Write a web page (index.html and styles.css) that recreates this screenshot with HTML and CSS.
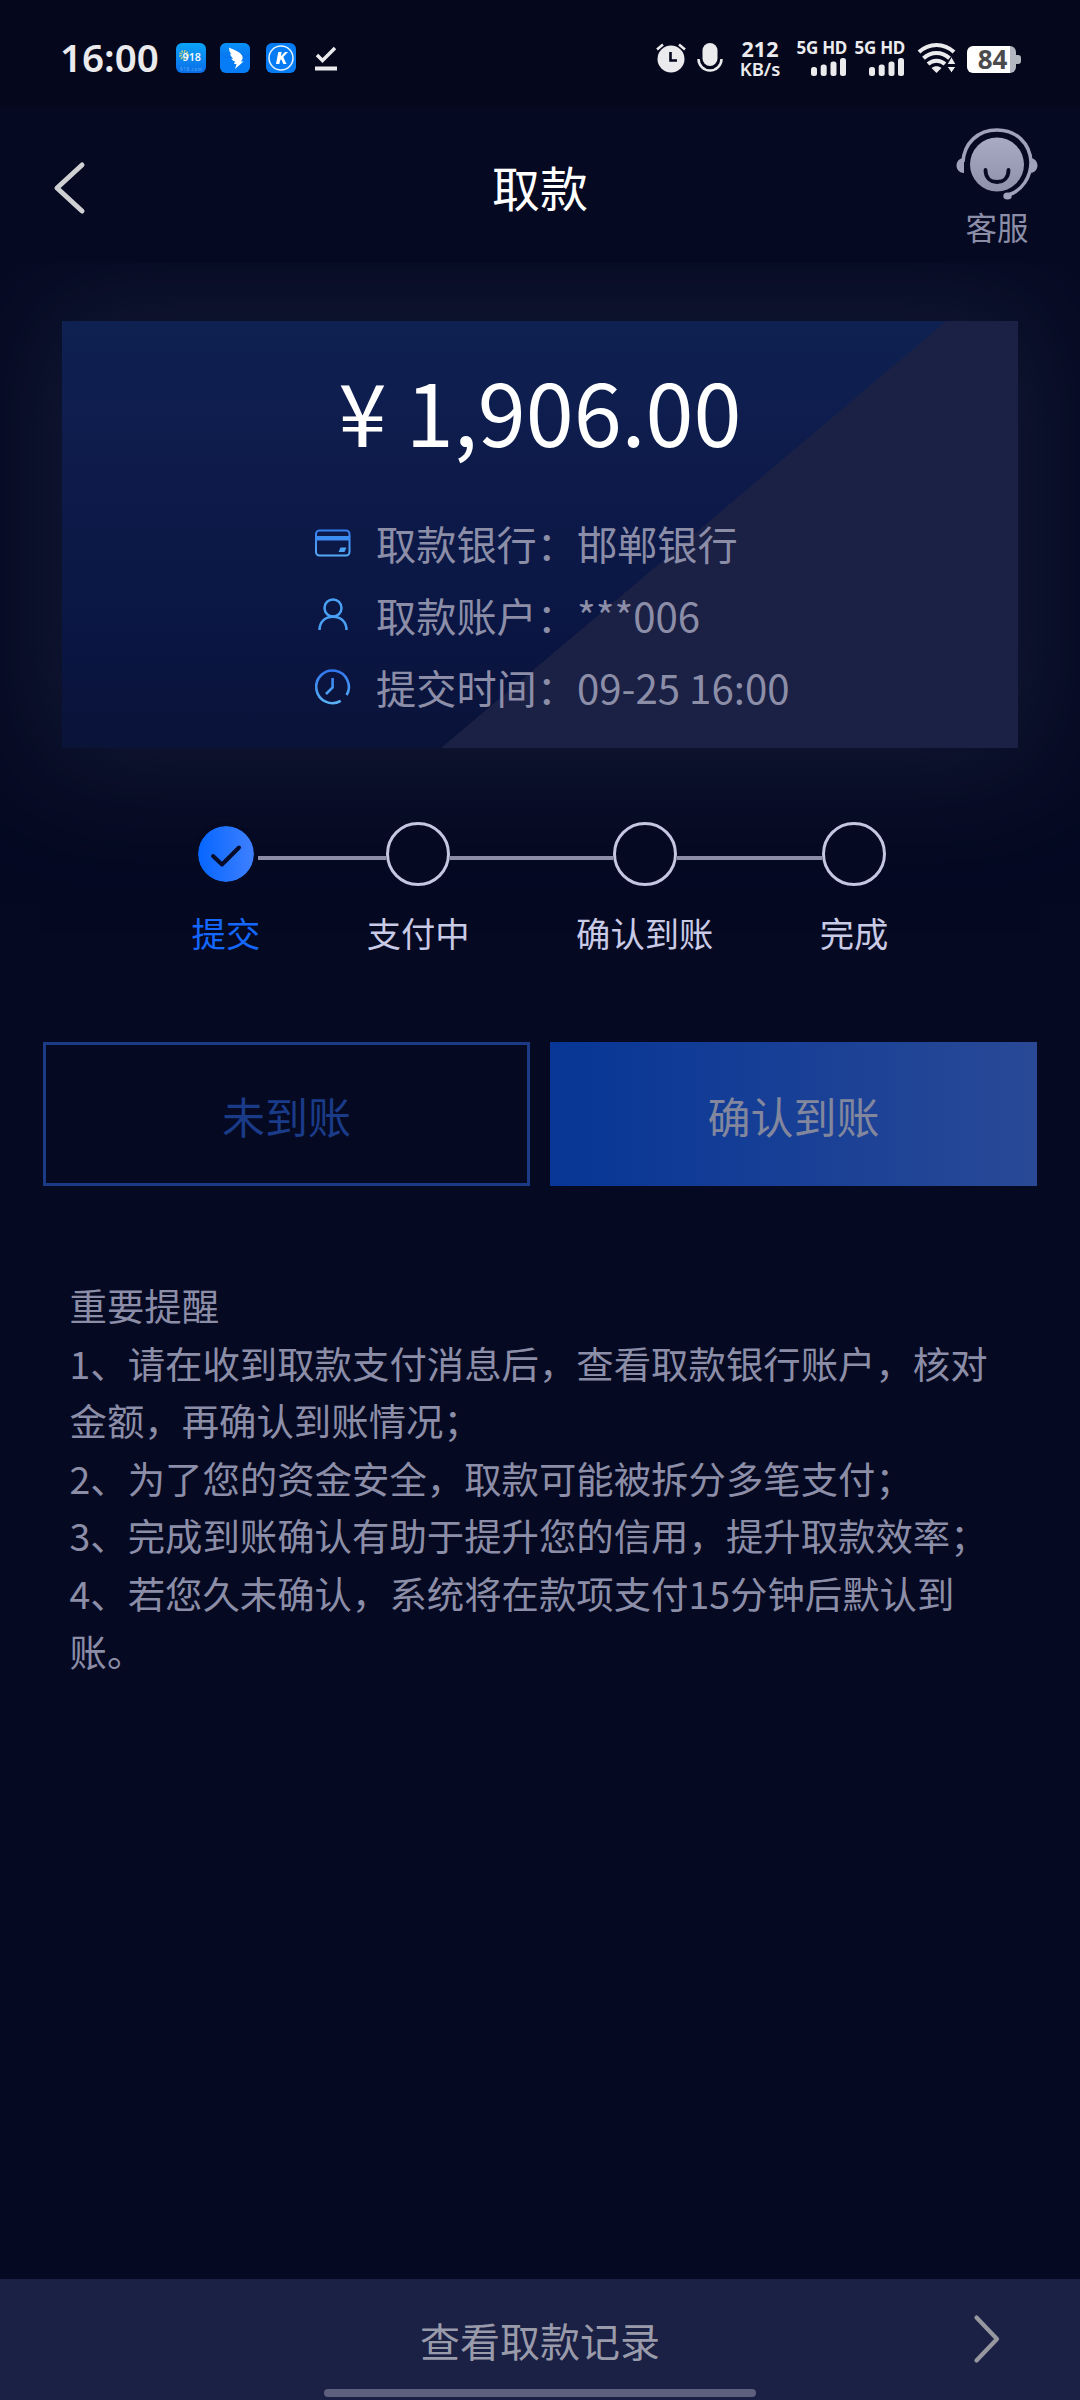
FILE: index.html
```html
<!DOCTYPE html>
<html lang="zh-CN">
<head>
<meta charset="utf-8">
<title>取款</title>
<link rel="stylesheet" href="styles.css">
</head>
<body>
<div class="status">
  <div class="status-left">
    <span class="clock">16:00</span>
    <svg class="app app-918" width="30" height="30" viewBox="0 0 30 30">
      <defs><linearGradient id="sky" x1="0" y1="0" x2="0" y2="1"><stop offset="0" stop-color="#0aa5f8"/><stop offset="1" stop-color="#0a6ce8"/></linearGradient></defs>
      <rect width="30" height="30" rx="6" fill="url(#sky)"/>
      <circle cx="8" cy="12" r="3.5" fill="none" stroke="#b9c98a" stroke-width="3" stroke-dasharray="1.3 1"/>
      <text x="6.500" y="18" class="t918" textLength="18.500" lengthAdjust="spacingAndGlyphs">918</text>
      <text x="4" y="27.500" class="tcoin" textLength="22">918.com</text>
    </svg>
    <svg class="app app-bird" width="30" height="30" viewBox="0 0 30 30">
      <rect width="30" height="30" rx="6" fill="#067df6"/><rect width="30" height="15" rx="6" fill="url(#sky)" opacity=".5"/>
      <path d="M9 4.500C14 7 21 9 22.500 13.500c.6 2-.5 3.500-1.500 5h2.500L15 26l1.500-5H14l1-2.500c-2-.5-3-1.700-3.600-3l2 .2c-2-1.500-3-3.200-3.400-5l1.600.8C9.500 9 9 7 9 4.500z" fill="#fff"/>
    </svg>
    <svg class="app app-k" width="30" height="30" viewBox="0 0 30 30">
      <rect width="30" height="30" rx="6" fill="#057cf3"/>
      <circle cx="15" cy="15" r="12" fill="none" stroke="#e8f3ff" stroke-width="1.500"/>
      <path d="M12.300 9h3.400l-.9 4.300L19 9h3l-4.700 5 3.200 7h-3.200l-2.100-4.700-1.100 1.200-.7 3.500H10z" fill="#fff"/>
    </svg>
    <svg class="tick" width="22" height="26" viewBox="0 0 22 26"><path d="M2 10l5.500 5.500L20 3" fill="none" stroke="#ebebee" stroke-width="3.500"/><rect y="21.500" width="22" height="4" fill="#ebebee"/></svg>
  </div>
  <div class="status-right">
    <svg class="alarm" width="30" height="30" viewBox="0 0 30 30"><circle cx="15" cy="16" r="13.500" fill="#ebebee"/><path d="M1 6.500L7 1.500M29 6.500l-6-5" stroke="#ebebee" stroke-width="2.500"/><path d="M14.500 9v8.500H21" fill="none" stroke="#05071d" stroke-width="2.600"/></svg>
    <svg class="mic" width="26" height="30" viewBox="0 0 26 30"><rect x="5.500" y="0" width="15" height="23" rx="7.500" fill="#ebebee"/><path d="M1.500 16a11.500 11.500 0 0 0 23 0" fill="none" stroke="#ebebee" stroke-width="2.500"/></svg>
    <span class="rate"><b>212</b><b>KB/s</b></span>
    <span class="sim"><b>5G HD</b><svg width="36" height="18" viewBox="0 0 36 18" fill="#ebebee"><rect x="0" y="9" width="6" height="9" rx="2.500"/><rect x="9.700" y="6.500" width="6" height="11.500" rx="2.500"/><rect x="19.500" y="3.500" width="6" height="14.500" rx="2.500"/><rect x="29" y="0" width="6" height="18" rx="2.500"/></svg></span>
    <span class="sim sim2"><b>5G HD</b><svg width="36" height="18" viewBox="0 0 36 18" fill="#ebebee"><rect x="0" y="9" width="6" height="9" rx="2.500"/><rect x="9.700" y="6.500" width="6" height="11.500" rx="2.500"/><rect x="19.500" y="3.500" width="6" height="14.500" rx="2.500"/><rect x="29" y="0" width="6" height="18" rx="2.500"/></svg></span>
    <svg class="wifi" width="37" height="30" viewBox="0 0 37 30"><g fill="none" stroke="#ebebee" stroke-width="4"><path d="M1 9C11-.5 26-.5 36 9"/><path d="M5.500 15.200c7.500-7 18.500-7 26 0"/><path d="M10 21c5-4.500 12-4.500 17 0"/></g><path d="M13.500 25c3-2.500 7-2.500 10 0l-5 5z" fill="#ebebee"/><path d="M33.500 13.500l4.500 8h-9zM33.500 30l-4.500-6.500h9z" fill="#ebebee" stroke="#05071c" stroke-width="1"/></svg>
    <span class="battery"><b>84</b></span>
  </div>
</div>
<header class="header">
  <svg class="back" width="30" height="52" viewBox="0 0 30 52"><path d="M28 3L3 26l25 23" fill="none" stroke="#cfd0d2" stroke-width="5" stroke-linecap="round" stroke-linejoin="round"/></svg>
  <h1>取款</h1>
  <div class="service">
    <svg width="82" height="73" viewBox="0 0 82 73">
      <defs><linearGradient id="face" x1="0" y1="0" x2="0" y2="1"><stop offset="0" stop-color="#a9abc4"/><stop offset="1" stop-color="#8f91aa"/></linearGradient></defs>
      <circle cx="41" cy="36.500" r="27" fill="url(#face)"/>
      <path d="M7 34C8 15 22 2 41 2S74 15 75 34c0 15-9 29-23 33" fill="none" stroke="#a0a2bb" stroke-width="3.500"/>
      <path d="M8 30v15c-4 0-7.500-3-7.500-7.500S4 30 8 30zM74 30v15c4 0 7.500-3 7.500-7.500S78 30 74 30z" fill="#a0a2bb"/>
      <ellipse cx="51.500" cy="68" rx="4.200" ry="3.500" fill="#a0a2bb"/>
      <path d="M29.500 42c0 8 5 12 11.500 12s11.500-4 11.500-12" fill="none" stroke="#060a23" stroke-width="3.800" stroke-linecap="round"/>
    </svg>
    <span>客服</span>
  </div>
</header>
<main>
  <section class="card">
    <div class="amount">¥ 1,906.00</div>
    <div class="rows">
      <div class="row"><svg width="36" height="36" viewBox="0 0 36 36"><defs><linearGradient id="ic" gradientUnits="userSpaceOnUse" x1="0" y1="0" x2="0" y2="36"><stop offset="0" stop-color="#2f74ee"/><stop offset="1" stop-color="#5cb4f5"/></linearGradient></defs><rect x="1" y="5.500" width="33.500" height="25" rx="3.500" fill="none" stroke="url(#ic)" stroke-width="2"/><path d="M1 11h33.500v4.500H1z" fill="#3c8cf2"/><path d="M25.500 22.500h6l-2 4.500h-6z" fill="#4da2f4"/></svg><span>取款银行：邯郸银行</span></div>
      <div class="row"><svg width="36" height="36" viewBox="0 0 36 36" fill="none" stroke="#4aa0f4" stroke-width="2.500"><circle cx="18" cy="11" r="8.500"/><path d="M4.500 33c0-8 5.500-13.300 13.500-13.300S31.500 25 31.500 33"/></svg><span>取款账户：***006</span></div>
      <div class="row"><svg width="36" height="36" viewBox="0 0 36 36" fill="none" stroke="url(#ic)" stroke-width="2.600"><path d="M25.700 31.900A16.300 16.300 0 1 1 31.600 26"/><path d="M17.600 9v9.500L11 25"/></svg><span>提交时间：09-25 16:00</span></div>
    </div>
  </section>
  <section class="steps">
    <div class="step done"><div class="track"><i></i><span class="dot"><svg width="56" height="56" viewBox="0 0 56 56"><path d="M15 30l9 8.500L41 21.500" fill="none" stroke="#070c2c" stroke-width="4" stroke-linecap="round" stroke-linejoin="round"/></svg></span><i></i></div><span>提交</span></div>
    <div class="step"><div class="track"><i></i><span class="dot"></span><i></i></div><span>支付中</span></div>
    <div class="step"><div class="track"><i></i><span class="dot"></span><i></i></div><span>确认到账</span></div>
    <div class="step"><div class="track"><i></i><span class="dot"></span><i></i></div><span>完成</span></div>
  </section>
  <section class="actions">
    <button class="btn outline">未到账</button>
    <button class="btn solid">确认到账</button>
  </section>
  <section class="notes">
    <p>重要提醒</p>
    <p>1、请在收到取款支付消息后，查看取款银行账户，核对金额，再确认到账情况；</p>
    <p>2、为了您的资金安全，取款可能被拆分多笔支付；</p>
    <p>3、完成到账确认有助于提升您的信用，提升取款效率；</p>
    <p>4、若您久未确认，系统将在款项支付15分钟后默认到账。</p>
  </section>
</main>
<footer class="footer">
  <div class="records"><span>查看取款记录</span><svg width="26" height="48" viewBox="0 0 26 48"><path d="M2.500 2.500L23 24 2.500 45.500" fill="none" stroke="#97989f" stroke-width="4.200" stroke-linecap="round" stroke-linejoin="round"/></svg></div>
  <div class="home"></div>
</footer>
</body>
</html>
```
FILE: styles.css
```css
* { box-sizing: border-box; margin: 0; padding: 0; }
body {
  width: 1080px; height: 2400px; overflow: hidden;
  display: flex; flex-direction: column;
  background: #050922; color: #8c8ea8;
  font-family: "Noto Sans CJK SC", sans-serif;
}
svg { display: block; flex: none; overflow: visible; }

.status {
  flex: none; height: 107px; background: #05071c; color: #ebebee;
  display: flex; justify-content: space-between; align-items: flex-start;
  padding: 0 59px 0 60px; font-family: "Noto Sans", sans-serif;
}
.status-left, .status-right { display: flex; height: 116px; align-items: center; }
.clock { width: 100px; font-size: 38.500px; font-weight: 600; white-space: nowrap; margin-top: -2px; }
.app-918 { margin-left: 16px; }
.app-bird { margin-left: 14px; }
.app-k { margin-left: 16px; }
.tick { margin-left: 19px; }
.t918 { font: 600 11.500px "Noto Sans", sans-serif; fill: #f3f8ff; }
.tcoin { font: 4.500px "Noto Sans", sans-serif; fill: #5ab0f5; }
.mic { margin-left: 11px; }
.rate { display: flex; flex-direction: column; align-items: center; width: 44px; margin-left: 15px; margin-right: 1px; }
.rate b { font-size: 21.500px; line-height: 19px; font-weight: 700; }
.rate b + b { font-size: 18.500px; line-height: 19px; font-weight: 600; margin-top: 1px; }
.sim { display: flex; flex-direction: column; align-items: flex-end; width: 50px; margin-left: 14px; margin-top: -2px; }
.sim b { font-size: 17px; line-height: 17px; font-weight: 700; white-space: nowrap; margin-bottom: 2px; letter-spacing: -0.3px; }
.sim2 { margin-left: 8px; }
.wifi { margin-left: 13px; }
.battery {
  position: relative; width: 49px; height: 27px; margin-left: 12px; margin-right: 5px; margin-top: 3px;
  border-radius: 6px; background: linear-gradient(90deg, #fff 43px, #b5b7c0 43px);
  display: flex; align-items: center; justify-content: center;
}
.battery::after { content: ""; position: absolute; left: 49px; top: 9px; width: 5px; height: 9px; border-radius: 0 3px 3px 0; background: #b5b7c0; }
.battery b { color: #4b4b4d; font-size: 26px; line-height: 27px; font-weight: 700; padding-left: 2px; }

.header {
  flex: none; height: 156px; display: grid; grid-template-columns: 1fr auto 1fr; align-items: center;
  padding: 4px 42px 0 54px; background: #050922; position: relative; z-index: 1;
}
.header h1 { color: #fff; font-size: 48px; font-weight: 400; line-height: 60px; margin: -3px 6px 0 -6px; }
.back { margin-top: 2px; }
.service { justify-self: end; display: flex; flex-direction: column; align-items: center; }
.service span { font-size: 31.500px; line-height: 38px; margin: 6px 0 2px; }

main { flex: 1; overflow: hidden; }
.card {
  width: 956px; height: 427px; margin: 58px auto 0 62px; padding-top: 33px;
  background:
    linear-gradient(139.800deg, transparent 0 60.500%, #1b2045 60.550%),
    linear-gradient(180deg, #0e2151 0, #0e1c4c 30%, #0a1542 75%, #0a1338 100%);
  box-shadow: 0 0 110px 22px #131934;
}
.amount { text-align: center; color: #fff; font-size: 86.400px; line-height: 112px; white-space: pre; }
.rows { margin: 41px 0 0 253px; }
.row { display: flex; align-items: center; height: 72px; gap: 25px; font-size: 40.200px; line-height: 72px; white-space: nowrap; }

.steps { display: flex; justify-content: center; gap: 106.500px; padding-top: 74px; color: #c9cae6; font-size: 34.300px; line-height: 48px; text-align: center; }
.track { display: flex; align-items: center; height: 64px; margin: 0 -53.250px 22px; }
.track i { flex: 1; height: 4px; margin-top: 8px; background: #8c8da6; }
.step:first-child i:first-child, .step:last-child i:last-child { background: none; }
.dot { flex: none; width: 64px; height: 64px; border: 3px solid #c5c6e2; border-radius: 50%; background: #050922; }
.done { color: #1468ff; }
.done .dot { border: 4px solid #050922; background: linear-gradient(90deg, #0566ff, #3f80ff) padding-box; }

.actions { display: grid; grid-template-columns: 1fr 1fr; gap: 20px; padding: 86px 43px 0; }
.btn { height: 144px; border: 0; font: 43px "Noto Sans CJK SC", sans-serif; padding-top: 1px; }
.outline { border: 3px solid #1c3b86; background: transparent; color: #1a3b88; }
.solid { background: linear-gradient(90deg, #073696, #294996); color: #82879d; }

.notes { padding: 91px 69px 0 69.500px; font-size: 37.400px; line-height: 57.600px; }

.footer { flex: none; height: 121px; background: #1b2045; display: flex; flex-direction: column; align-items: center; }
.records { width: 100%; height: 110px; display: grid; grid-template-columns: 1fr auto 1fr; align-items: center; padding: 12px 80px 0; font-size: 40px; line-height: 60px; color: #9a9baa; }
.records span { grid-column: 2; }
.records svg { justify-self: end; margin-top: -2px; }
.home { width: 432px; height: 8px; border-radius: 4px; background: #5e607d; }
```
